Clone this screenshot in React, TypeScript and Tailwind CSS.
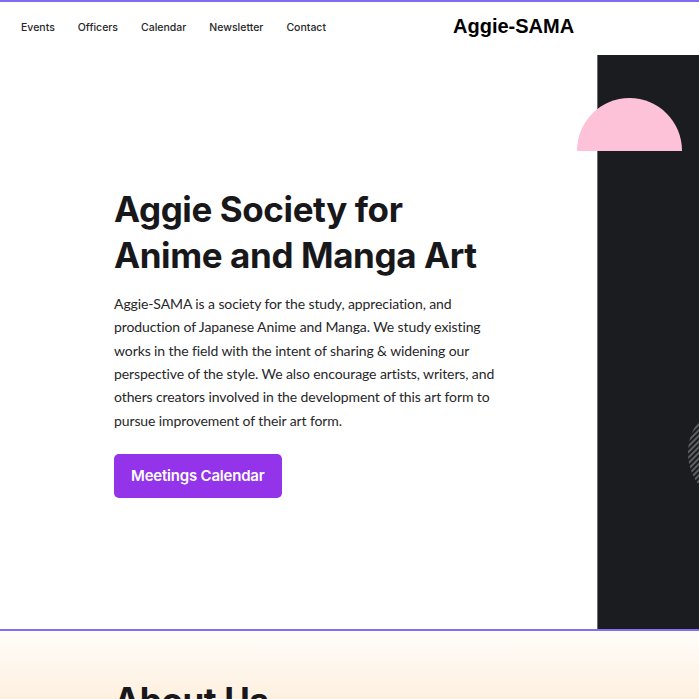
const lines = [
  'Aggie-SAMA is a society for the study, appreciation, and',
  'production of Japanese Anime and Manga. We study existing',
  'works in the field with the intent of sharing & widening our',
  'perspective of the style. We also encourage artists, writers, and',
  'others creators involved in the development of this art form to',
  'pursue improvement of their art form.',
]

export default function App() {
  return (
    <div className="min-h-screen bg-white text-[#18181b]" style={{ fontFamily: 'Inter, "Noto Sans", sans-serif' }}>
      <header className="border-t-2 border-[#7f6cf2] bg-white">
        <div className="h-[53px] flex items-center px-[21px] pb-[2px]">
          <nav className="flex items-center gap-[23px] text-[10.5px] font-medium text-[#27272a]">
            <a href="#">Events</a>
            <a href="#">Officers</a>
            <a href="#">Calendar</a>
            <a href="#">Newsletter</a>
            <a href="#">Contact</a>
          </nav>
          <div className="ml-[127px] mb-[3px] text-[20px] font-bold text-black" style={{ fontFamily: '"Liberation Sans", Arial, sans-serif' }}>
            Aggie-SAMA
          </div>
        </div>
      </header>

      <section className="flex h-[576px] border-b-2 border-[#8070f3]">
        <div className="flex-1 flex items-center pl-[114px]">
          <div>
            <h1 className="text-[35px] leading-[46px] font-bold tracking-[-0.4px]">
              Aggie Society for
              <br />
              Anime and Manga Art
            </h1>
            <p className="mt-[14px] text-[14px] leading-[23.4px] text-[#27272a] tracking-[-0.1px]" style={{ fontFamily: 'Lato, "Noto Sans", sans-serif' }}>
              {lines.map((l) => (
                <span key={l} className="block whitespace-nowrap">{l}</span>
              ))}
            </p>
            <button className="mt-[22px] h-[44px] px-[17px] rounded-[5px] bg-[#9333ea] text-white text-[15px] font-semibold tracking-[-0.2px]">
              Meetings Calendar
            </button>
          </div>
        </div>
        <div className="relative w-[102px] bg-[#1b1c20] border-l border-[#6b6b70]">
          <div className="absolute left-[-21px] top-[43px] w-[105px] h-[53px] rounded-t-full bg-[#fdc2d7]" />
          <svg className="absolute left-[90px] top-[345px]" width="110" height="110" viewBox="0 0 110 110">
            <defs>
              <pattern id="hatch" width="4" height="4" patternUnits="userSpaceOnUse" patternTransform="rotate(45)">
                <rect width="2" height="4" fill="#5f5f64" />
              </pattern>
            </defs>
            <circle cx="53" cy="53" r="53" fill="url(#hatch)" />
          </svg>
        </div>
      </section>

      <section className="h-[120px] bg-gradient-to-b from-[#fffdfa] to-[#fce6cb] pt-[46px] pl-[114px]">
        <h2 className="text-[35px] font-bold leading-[46px] tracking-[-0.4px]">About Us</h2>
      </section>
    </div>
  )
}
